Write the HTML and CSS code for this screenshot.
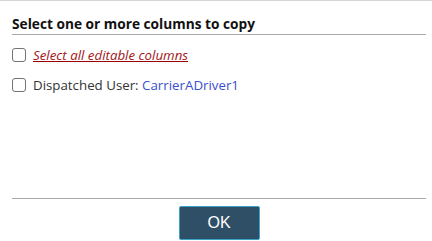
FILE: index.html
```html
<!DOCTYPE html>
<html lang="en">
<head>
    <meta charset="UTF-8">
    <meta name="viewport" content="width=device-width, initial-scale=1.0">
    <link rel="stylesheet" href="styles.css">
</head>
<body>
    <div class="dialog">
        <h2 class="title">Select one or more columns to copy</h2>

        <div class="columns">
            <label class="option">
                <input type="checkbox">
                <span class="select-all">Select all editable columns</span>
            </label>
            <label class="option">
                <input type="checkbox">
                <span>Dispatched User: <span class="value">CarrierADriver1</span></span>
            </label>
        </div>

        <div class="footer">
            <button class="ok-btn">OK</button>
        </div>
    </div>
</body>
</html>
```

FILE: styles.css
```css
body {
    margin: 0;
    font-family: "Open Sans", Arial, sans-serif;
    background-color: #ffffff;
    color: #222;
}
.dialog {
    height: 241px;
    box-sizing: border-box;
    border-top: 1px solid #d4d4d4;
    padding: 0 6px 0 12px;
    display: flex;
    flex-direction: column;
}
.title {
    margin: 13px 0 0 0;
    padding-bottom: 1px;
    font-size: 13.7px;
    font-weight: bold;
    color: #111;
    border-bottom: 1px solid #aaa;
    white-space: nowrap;
}
.columns {
    flex: 1;
    display: flex;
    flex-direction: column;
    gap: 12px;
    padding-top: 11px;
}
.option {
    display: flex;
    align-items: center;
    gap: 7px;
    font-size: 13.3px;
    color: #333;
}
.option input {
    appearance: none;
    margin: 0;
    width: 14px;
    height: 14px;
    border: 1px solid #747474;
    border-radius: 3px;
    background: #fff;
}
.select-all {
    color: #a3161a;
    font-style: italic;
    text-decoration: underline;
    text-decoration-color: #9a0000;
}
.value {
    color: #3a4fd0;
}
.footer {
    border-top: 1px solid #aaa;
    margin-bottom: 1px;
    padding-top: 7px;
    display: flex;
    justify-content: center;
}
.ok-btn {
    width: 81px;
    height: 34px;
    background-color: #2e4f66;
    color: #fff;
    border: 1px solid #3aa3c8;
    border-radius: 2px;
    font-family: "Liberation Sans", Arial, sans-serif;
    font-size: 16px;
}
```
